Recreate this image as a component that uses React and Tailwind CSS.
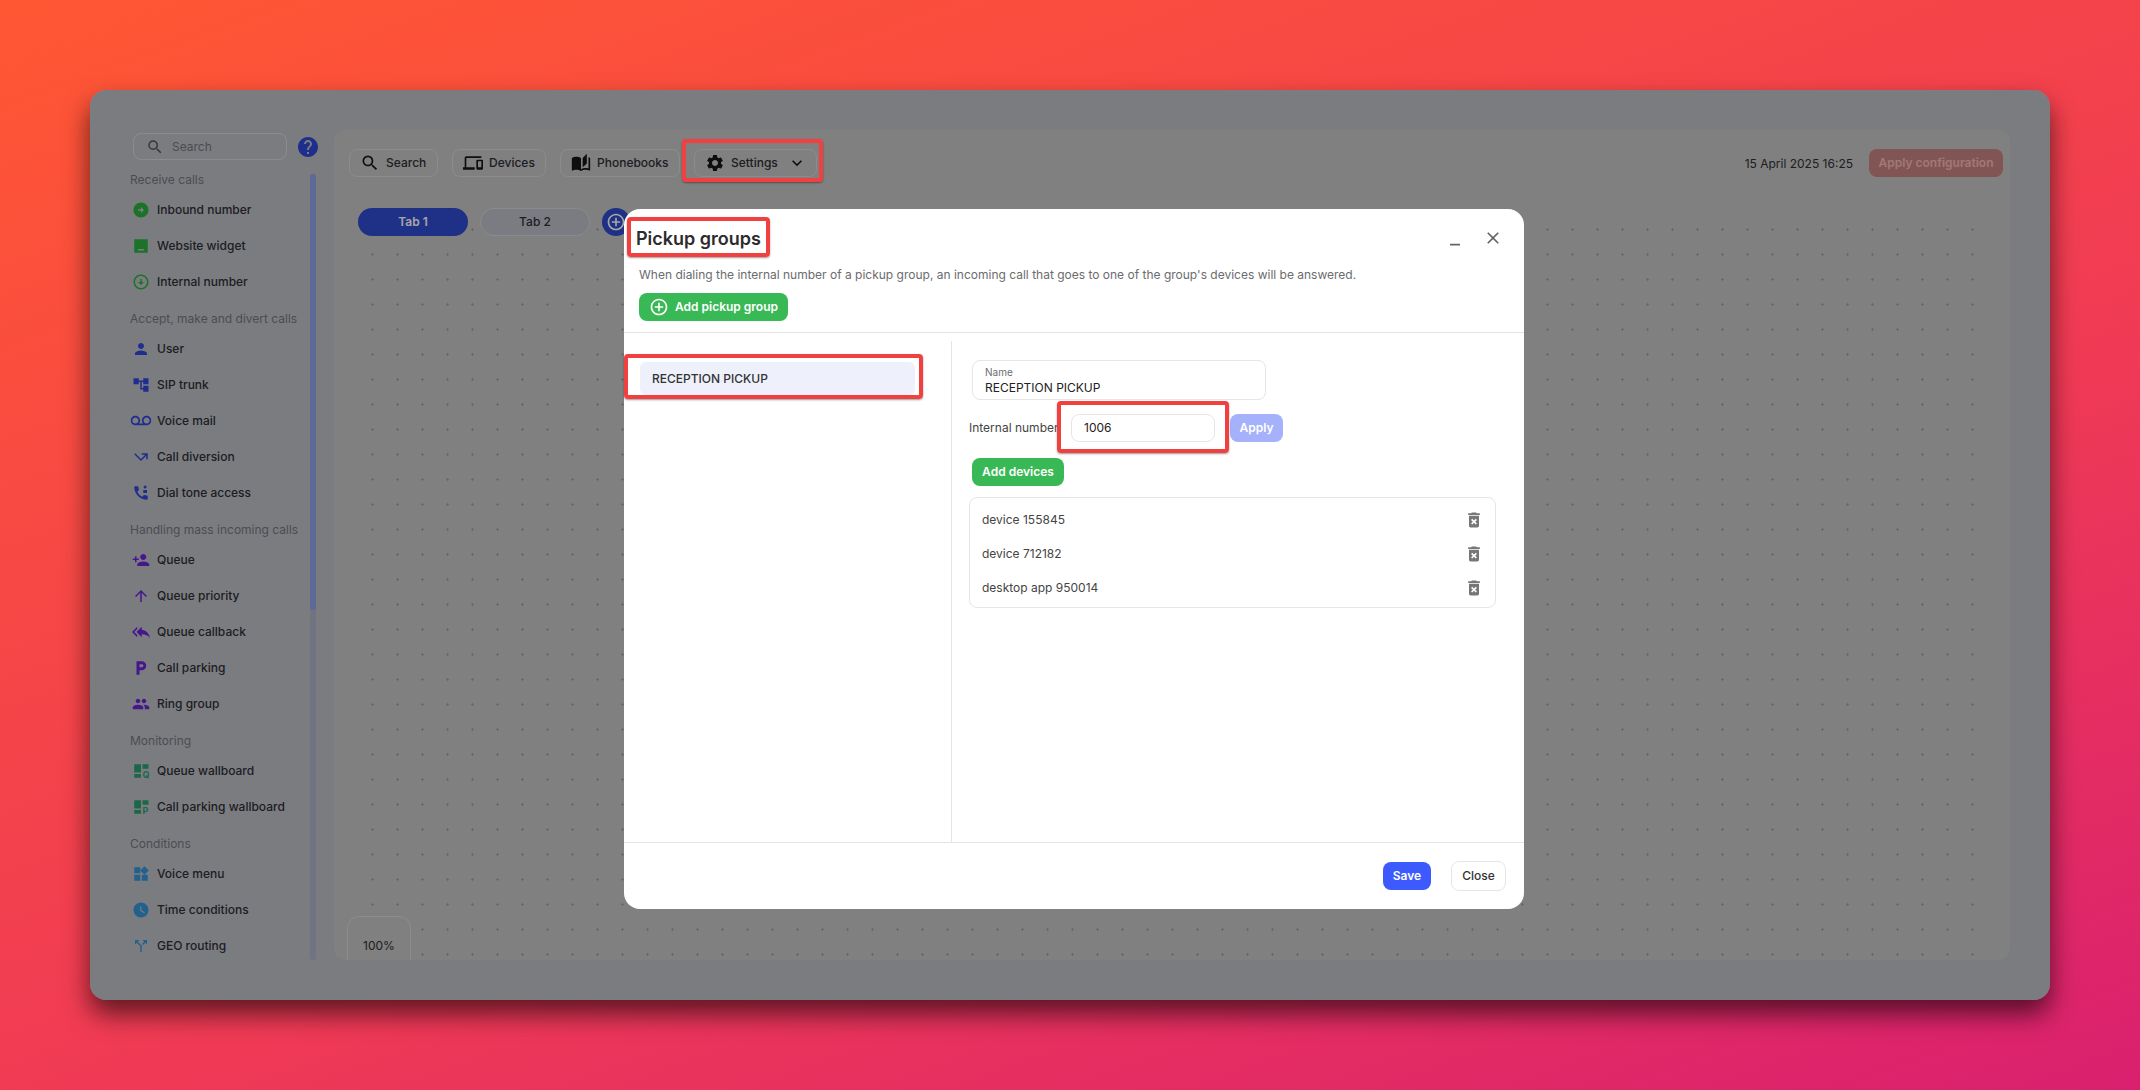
import React from "react";
import {
  MdAccountTree,
  MdAddCircleOutline,
  MdArrowCircleDown,
  MdArrowCircleRight,
  MdArrowUpward,
  MdAutoStories,
  MdCallMissedOutgoing,
  MdCallSplit,
  MdClose,
  MdDeleteForever,
  MdDevices,
  MdExpandMore,
  MdHelp,
  MdLocalParking,
  MdMinimize,
  MdPeople,
  MdPerson,
  MdPersonAdd,
  MdReplyAll,
  MdSearch,
  MdSettings,
  MdVoicemail,
  MdWatchLater,
  MdWidgets,
} from "react-icons/md";

const WidgetIcon = ({ className }) => (
  <svg viewBox="0 0 24 24" className={className} fill="currentColor">
    <path d="M3 3h18v18H3z" />
    <path d="M8 16h8v2H8z" fill="#bdbfc5" />
  </svg>
);

const DialToneIcon = ({ className }) => (
  <svg viewBox="0 0 24 24" className={className} fill="currentColor">
    <path d="M20.01 15.38c-1.23 0-2.42-.2-3.53-.56-.35-.12-.74-.03-1.01.24l-1.57 1.97c-2.83-1.35-5.48-3.9-6.89-6.83l1.95-1.66c.27-.28.35-.67.24-1.02-.37-1.11-.56-2.3-.56-3.53 0-.54-.45-.99-.99-.99H4.19C3.65 3 3 3.24 3 3.99 3 13.28 10.73 21 20.01 21c.71 0 .99-.63.99-1.18v-3.45c0-.54-.45-.99-.99-.99z" />
    <circle cx="17.5" cy="4" r="2" />
    <path d="M15 8h5v4h-5z" />
  </svg>
);

const VoicemailIcon = ({ className }) => <MdVoicemail className={`${className} scale-[1.15]`} />;

const WallboardIcon = ({ className, letter }) => (
  <svg viewBox="0 0 24 24" className={className} fill="currentColor">
    <path d="M3 3h9v11H3zM14 3h8v6h-8zM3 16h9v5H3z" />
    <text x="14" y="21" fontSize="12" fontWeight="700" fontFamily="Inter, sans-serif">
      {letter}
    </text>
  </svg>
);

const groups = [
  {
    title: "Receive calls",
    color: "text-[#2cb040]",
    items: [
      { label: "Inbound number", Icon: MdArrowCircleRight },
      { label: "Website widget", Icon: WidgetIcon },
      { label: "Internal number", Icon: MdArrowCircleDown },
    ],
  },
  {
    title: "Accept, make and divert calls",
    color: "text-[#3048d8]",
    items: [
      { label: "User", Icon: MdPerson },
      { label: "SIP trunk", Icon: MdAccountTree },
      { label: "Voice mail", Icon: VoicemailIcon },
      { label: "Call diversion", Icon: MdCallMissedOutgoing },
      { label: "Dial tone access", Icon: DialToneIcon },
    ],
  },
  {
    title: "Handling mass incoming calls",
    color: "text-[#6a22d8]",
    items: [
      { label: "Queue", Icon: MdPersonAdd },
      { label: "Queue priority", Icon: MdArrowUpward },
      { label: "Queue callback", Icon: MdReplyAll },
      { label: "Call parking", Icon: MdLocalParking },
      { label: "Ring group", Icon: MdPeople },
    ],
  },
  {
    title: "Monitoring",
    color: "text-[#2aa070]",
    items: [
      { label: "Queue wallboard", Icon: WallboardIcon, letter: "Q" },
      { label: "Call parking wallboard", Icon: WallboardIcon, letter: "P" },
    ],
  },
  {
    title: "Conditions",
    color: "text-[#3496d8]",
    items: [
      { label: "Voice menu", Icon: MdWidgets },
      { label: "Time conditions", Icon: MdWatchLater },
      { label: "GEO routing", Icon: MdCallSplit },
    ],
  },
];

const toolbar = [
  { label: "Search", Icon: MdSearch, width: "w-[89px]" },
  { label: "Devices", Icon: MdDevices, width: "w-[94px]" },
  { label: "Phonebooks", Icon: MdAutoStories, width: "w-[120px]" },
];

const devices = ["device 155845", "device 712182", "desktop app 950014"];

const Sidebar = () => (
  <div className="relative w-[190px] h-[830px] overflow-hidden shrink-0">
    <div className="flex items-start h-[38px] pt-[3px] pl-[3px]">
      <div className="w-[154px] h-[27px] rounded-lg border border-[#d7d8dc] flex items-center pl-[12px] gap-[8px] text-[12px] text-[#74767c]">
        <MdSearch className="w-[18px] h-[18px] text-[#55565a]" />
        Search
      </div>
      <MdHelp className="w-[24px] h-[24px] ml-[9px] mt-[2px] text-[#3048d8]" />
    </div>
    <div className="flex flex-col gap-[7px]">
      {groups.map((group) => (
        <div key={group.title}>
          <div className="h-[24px] flex items-center text-[12px] text-[#74767c] whitespace-nowrap">
            {group.title}
          </div>
          {group.items.map(({ label, Icon, letter }) => (
            <div key={label} className="h-[36px] flex items-center">
              <div className={`w-[27px] flex justify-center -ml-[3px] ${group.color}`}>
                <Icon className="w-[18px] h-[18px]" letter={letter} />
              </div>
              <span className="ml-[3px] text-[12px] font-medium text-[#2e2e34]">{label}</span>
            </div>
          ))}
        </div>
      ))}
    </div>
    <div className="absolute left-[180px] top-[44px] bottom-0 w-[6px] rounded-full bg-[#acb1c8]">
      <div className="w-[6px] h-[436px] rounded-full bg-[#92a1e6]" />
    </div>
  </div>
);

const ToolButton = ({ label, Icon, width }) => (
  <div className={`${width} h-[28px] rounded-lg border border-[#d7d7d7] flex items-center pl-[10px] gap-[6px] text-[12px] font-medium text-[#2e2e34]`}>
    <Icon className="w-[20px] h-[20px] text-[#161616]" />
    {label}
  </div>
);

const Canvas = () => (
  <div className="relative flex-1 h-[830px] rounded-xl bg-[#c5c5c5] overflow-hidden">
    <div className="flex items-start pl-[15px] pr-[7px] pt-[19px]">
      <div className="flex gap-[14px]">
        {toolbar.map((b) => (
          <ToolButton key={b.label} {...b} />
        ))}
        <div className="w-[123px] h-[28px] rounded-lg border border-[#d7d7d7] flex items-center pl-[10px] gap-[6px] text-[12px] font-medium text-[#2e2e34]">
          <MdSettings className="w-[20px] h-[20px] text-[#161616]" />
          Settings
          <MdExpandMore className="w-[20px] h-[20px] ml-auto mr-[9px] text-[#161616]" />
        </div>
      </div>
      <div className="ml-auto flex items-center gap-[16px]">
        <span className="text-[12px] mt-[2px] text-[#2e2e34]">15 April 2025 16:25</span>
        <div className="w-[134px] h-[28px] rounded-lg bg-[#c88383] flex items-center justify-center text-[12px] font-semibold text-[#f6b9b9]">
          Apply configuration
        </div>
      </div>
    </div>
    <div className="flow-root mt-[40px] ml-[26px] mr-[25px] h-[743px] bg-[radial-gradient(circle,#a2a2a2_1px,transparent_1.2px)] bg-[length:25px_25px]">
      <div className="flex items-center gap-[12px] -mt-[9px] -ml-[2px]">
        <div className="w-[110px] h-[28px] rounded-full bg-[#314ad0] flex items-center justify-center text-[12px] font-semibold text-white">
          Tab 1
        </div>
        <div className="w-[110px] h-[28px] rounded-full border border-[#d2d4dc] bg-[#bdbfc8] flex items-center justify-center text-[12px] font-medium text-[#2e2e34]">
          Tab 2
        </div>
        <div className="w-[28px] h-[28px] rounded-full bg-[#314ad0] flex items-center justify-center">
          <MdAddCircleOutline className="w-[20px] h-[20px] text-white" />
        </div>
      </div>
    </div>
    <div className="absolute left-[13px] top-[786px] w-[64px] h-[60px] rounded-xl border border-[#d7d7d7] bg-[#c5c5c5] pt-[20px] text-center text-[12px] text-[#2e2e34]">
      100%
    </div>
  </div>
);

const Modal = () => (
  <div className="absolute left-[534px] top-[119px] w-[900px] h-[700px] rounded-2xl bg-white flex flex-col overflow-hidden">
    <div className="h-[124px] border-b border-[#e4e4e4] pl-[15px]">
      <div className="flex items-center justify-between h-[58px] pr-[21px]">
        <h1 className="text-[18px] font-semibold leading-none text-[#2c2c2e] -ml-[3px] mt-[2px]">Pickup groups</h1>
        <div className="flex items-center gap-[18px] text-[#666]">
          <MdMinimize className="w-[20px] h-[20px]" />
          <MdClose className="w-[20px] h-[20px]" />
        </div>
      </div>
      <p className="text-[12px] leading-[16px] text-[#6b6b6e]">
        When dialing the internal number of a pickup group, an incoming call that goes to one of the group's devices will be answered.
      </p>
      <div className="mt-[10px] w-[149px] h-[28px] rounded-lg bg-[#39b955] flex items-center pl-[10px] gap-[6px] text-[12px] font-semibold text-white">
        <MdAddCircleOutline className="w-[20px] h-[20px]" />
        Add pickup group
      </div>
    </div>
    <div className="flex flex-1 min-h-0">
      <div className="w-[328px] mt-[8px] pt-[21px] pl-[16px] pr-[36px] border-r border-[#e4e4e4]">
        <div className="h-[33px] rounded-md bg-[#eef1fc] flex items-center pl-[12px] text-[12px] font-medium text-[#333]">
          RECEPTION PICKUP
        </div>
      </div>
      <div className="flex-1 pl-[17px] pr-[28px] pt-[27px]">
        <div className="ml-[3px] w-[294px] h-[40px] rounded-lg border border-[#e6e6e6] pl-[12px] pt-[5px]">
          <div className="text-[10px] leading-[13px] text-[#6b6b6e]">Name</div>
          <div className="text-[12px] leading-[17px] text-[#222]">RECEPTION PICKUP</div>
        </div>
        <div className="flex items-center mt-[14px]">
          <span className="w-[102px] text-[12px] -mt-[1px] text-[#444] whitespace-nowrap">Internal number</span>
          <div className="w-[144px] h-[28px] rounded-lg border border-[#e6e6e6] flex items-center pl-[12px] text-[12px] text-[#222]">
            1006
          </div>
          <div className="ml-[15px] w-[53px] h-[28px] rounded-lg bg-[#a5b1fb] flex items-center justify-center text-[12px] font-semibold text-white">
            Apply
          </div>
        </div>
        <div className="ml-[3px] mt-[16px] w-[92px] h-[28px] rounded-lg bg-[#39b955] flex items-center justify-center text-[12px] font-semibold text-white">
          Add devices
        </div>
        <div className="mt-[11px] h-[111px] rounded-lg border border-[#e6e6e6] pt-[5px] pl-[12px] pr-[11px]">
          {devices.map((d) => (
            <div key={d} className="h-[34px] flex items-center justify-between text-[12px] text-[#444]">
              {d}
              <MdDeleteForever className="w-[20px] h-[20px] text-[#777]" />
            </div>
          ))}
        </div>
      </div>
    </div>
    <div className="h-[67px] border-t border-[#e4e4e4] flex items-center justify-end pr-[18px] gap-[20px]">
      <div className="w-[48px] h-[28px] rounded-lg bg-[#3d5afe] flex items-center justify-center text-[12px] font-semibold text-white">
        Save
      </div>
      <div className="w-[55px] h-[30px] rounded-lg border border-[#e6e6e6] flex items-center justify-center text-[12px] font-medium text-[#333]">
        Close
      </div>
    </div>
  </div>
);

const Highlight = ({ className }) => (
  <div className={`absolute border-[4px] border-[#f04040] rounded-[4px] shadow-[0_1px_2px_rgba(0,0,0,0.4)] ${className}`} />
);

export default function App() {
  return (
    <div className="w-[2140px] h-[1090px] pt-[90px] pl-[90px] bg-[linear-gradient(160deg,#ff5733,#f03a55_60%,#d9206f)] font-['Inter',sans-serif] overflow-hidden">
      <div className="relative w-[1960px] h-[910px] rounded-2xl bg-[#bdbfc5] shadow-[0_14px_26px_rgba(0,0,0,0.6)] overflow-hidden flex pt-[40px] pl-[40px] pr-[40px] gap-[14px]">
        <Sidebar />
        <Canvas />
        {/* dim layer under the dialog */}
        <div className="absolute inset-0 bg-black/35" />
        <Modal />
        <Highlight className="left-[592px] top-[49px] w-[141px] h-[43px]" />
        <Highlight className="left-[537px] top-[127px] w-[143px] h-[40px]" />
        <Highlight className="left-[534px] top-[264px] w-[299px] h-[45px]" />
        <Highlight className="left-[967px] top-[311px] w-[172px] h-[52px]" />
      </div>
    </div>
  );
}
